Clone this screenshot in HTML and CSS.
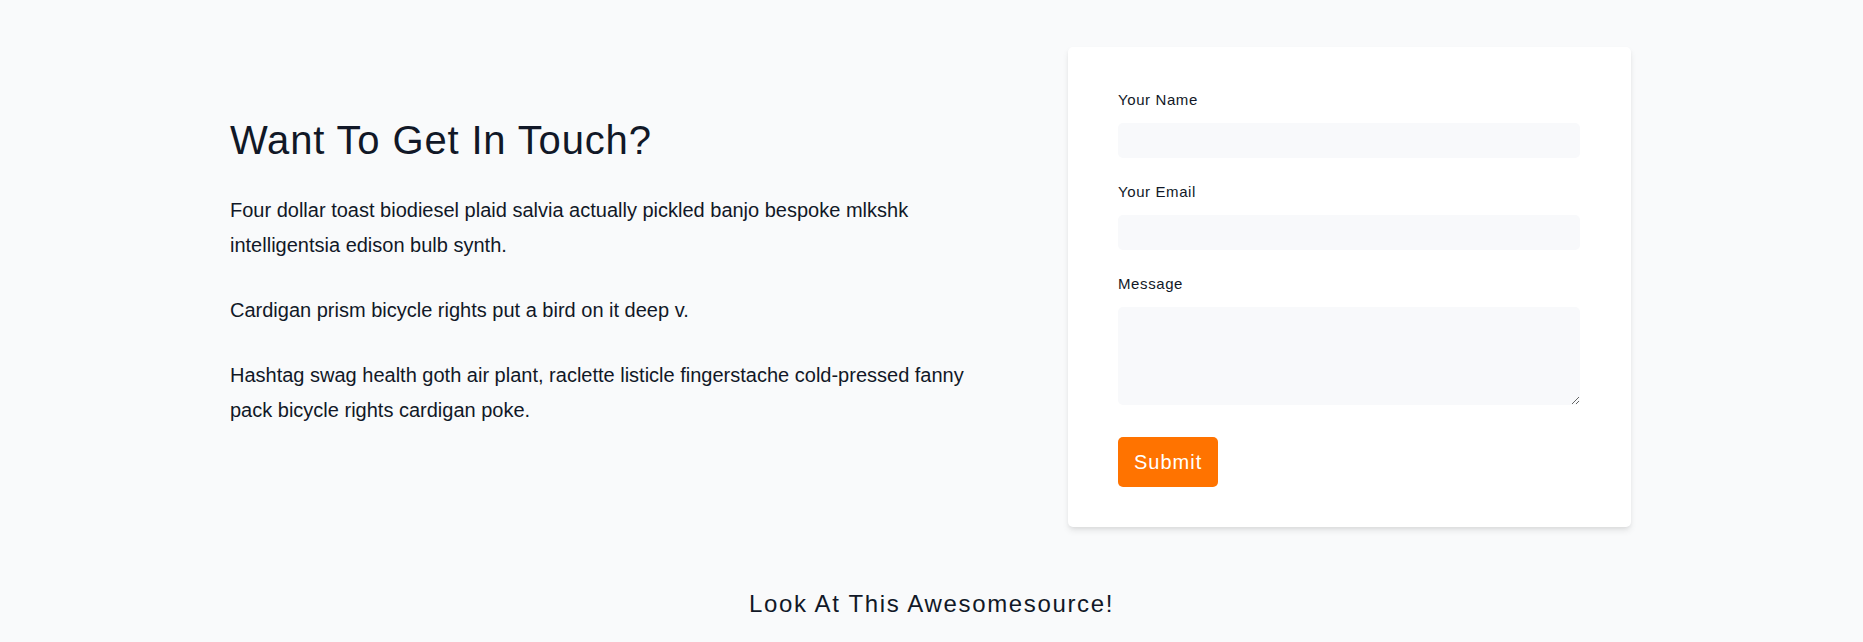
FILE: index.html
```html
<!DOCTYPE html>
<html lang="en">
<head>
<meta charset="utf-8">
<title>Contact</title>
<link rel="stylesheet" href="styles.css">
</head>
<body>
<section class="contact">
  <div class="container">
    <div class="intro">
      <h1>Want To Get In Touch?</h1>
      <p>Four dollar toast biodiesel plaid salvia actually pickled banjo bespoke mlkshk intelligentsia edison bulb synth.</p>
      <p>Cardigan prism bicycle rights put a bird on it deep v.</p>
      <p>Hashtag swag health goth air plant, raclette listicle fingerstache cold-pressed fanny pack bicycle rights cardigan poke.</p>
    </div>
    <form class="card">
      <div class="field">
        <label for="name">Your Name</label>
        <input id="name" type="text">
      </div>
      <div class="field">
        <label for="email">Your Email</label>
        <input id="email" type="email">
      </div>
      <div class="field field-msg">
        <label for="msg">Message</label>
        <textarea id="msg"></textarea>
      </div>
      <button type="button" class="submit">Submit</button>
    </form>
  </div>
</section>
<h2 class="source">Look At This Awesomesource!</h2>
</body>
</html>
```
FILE: styles.css
```css
html, body {
  margin: 0;
  background: #f9fafb;
  font-family: "Liberation Sans", Arial, sans-serif;
  color: #111827;
}

.contact {
  padding-top: 47px;
}

.container {
  width: 1403px;
  margin: 0 auto;
  display: grid;
  grid-template-columns: 760px 563px;
  column-gap: 78px;
  align-items: center;
}

.intro h1 {
  font-size: 40px;
  font-weight: 400;
  line-height: 46px;
  letter-spacing: 0.85px;
  margin: 0 0 30px;
}

.intro p {
  font-size: 20px;
  line-height: 35px;
  margin: 0 0 30px;
}

.card {
  background: #ffffff;
  border-radius: 5px;
  box-shadow: 0 4px 7px -1px rgba(0, 0, 0, 0.1), 0 2px 4px -1px rgba(0, 0, 0, 0.06);
  padding: 40px 51px 40px 50px;
  margin: 0;
}

.field {
  margin-bottom: 21px;
}

.field-msg {
  margin-bottom: 32px;
}

.field label {
  display: block;
  font-size: 15px;
  line-height: 25px;
  letter-spacing: 0.04em;
  margin-bottom: 11px;
  color: #111827;
}

.field input,
.field textarea {
  display: block;
  width: 100%;
  box-sizing: border-box;
  border: 0;
  border-radius: 5px;
  background: #f8f9fb;
  font-family: inherit;
  font-size: 16px;
  margin: 0;
}

.field input {
  height: 35px;
}

.field textarea {
  height: 98px;
}

.submit {
  display: block;
  height: 50px;
  padding: 0 16px;
  border: 0;
  border-radius: 5px;
  background: #ff7300;
  color: #ffffff;
  font-family: inherit;
  font-size: 20px;
  letter-spacing: 1px;
  cursor: pointer;
}

.source {
  margin: 61px 0 0;
  text-align: center;
  font-size: 24px;
  font-weight: 400;
  line-height: 32px;
  letter-spacing: 1.65px;
}
```
